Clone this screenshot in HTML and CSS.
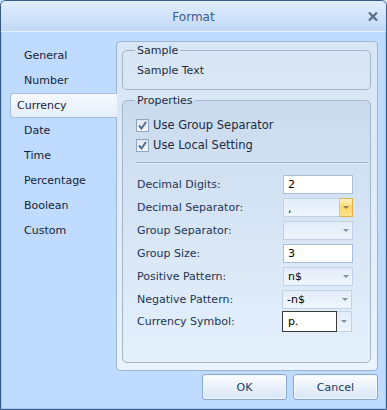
FILE: index.html
```html
<!DOCTYPE html>
<html>
<head>
<meta charset="utf-8">
<link rel="stylesheet" href="styles.css">
</head>
<body>
<div class="window">
  <div class="titlebar">
    <span class="title">Format</span>
    <svg class="close" width="10" height="9" viewBox="0 0 10 9"><path d="M1 0.5 L9 8.5 M9 0.5 L1 8.5" stroke="#5a6d86" stroke-width="2.2" fill="none"/></svg>
  </div>
  <div class="content">
    <div class="main">
      <ul class="nav">
        <li>General</li>
        <li>Number</li>
        <li class="selected">Currency</li>
        <li>Date</li>
        <li>Time</li>
        <li>Percentage</li>
        <li>Boolean</li>
        <li>Custom</li>
      </ul>
      <div class="panel">
        <fieldset class="group sample">
          <legend>Sample</legend>
          <div class="sample-text">Sample Text</div>
        </fieldset>
        <fieldset class="group props">
          <legend>Properties</legend>
          <div class="checks">
            <div class="check"><span class="box"><svg width="9" height="9" viewBox="0 0 9 9"><path d="M1 4.5 L3.5 7.5 L8 1" stroke="#56708f" stroke-width="2" fill="none"/></svg></span><span>Use Group Separator</span></div>
            <div class="check"><span class="box"><svg width="9" height="9" viewBox="0 0 9 9"><path d="M1 4.5 L3.5 7.5 L8 1" stroke="#56708f" stroke-width="2" fill="none"/></svg></span><span>Use Local Setting</span></div>
          </div>
          <div class="sep"></div>
          <div class="rows">
            <div class="row"><span class="label">Decimal Digits:</span><span class="field input">2</span></div>
            <div class="row"><span class="label">Decimal Separator:</span><span class="field combo"><span class="val low">,</span><span class="btn hot"><i class="arrow"></i></span></span></div>
            <div class="row"><span class="label">Group Separator:</span><span class="field combo"><span class="val"></span><span class="btn"><i class="arrow"></i></span></span></div>
            <div class="row"><span class="label">Group Size:</span><span class="field input">3</span></div>
            <div class="row"><span class="label">Positive Pattern:</span><span class="field combo"><span class="val">n$</span><span class="btn"><i class="arrow"></i></span></span></div>
            <div class="row"><span class="label">Negative Pattern:</span><span class="field combo shift"><span class="val">-n$</span><span class="btn"><i class="arrow"></i></span></span></div>
            <div class="row tall"><span class="label">Currency Symbol:</span><span class="field split shift"><span class="val focus">p.</span><span class="btn"><i class="arrow"></i></span></span></div>
          </div>
        </fieldset>
      </div>
    </div>
    <div class="footer">
      <button class="button">OK</button>
      <button class="button">Cancel</button>
    </div>
  </div>
</div>
</body>
</html>
```

FILE: styles.css
```css
html, body {
  margin: 0;
  padding: 0;
  background: #bfdbff;
}
body {
  font-family: "DejaVu Sans", sans-serif;
  font-size: 11px;
  color: #1c2b40;
}
.window {
  width: 387px;
  height: 410px;
  box-sizing: border-box;
  border: 1px solid #36598b;
  border-radius: 6px 6px 0 0;
  display: flex;
  flex-direction: column;
  overflow: hidden;
  background: #bfdbff;
}
.titlebar {
  height: 30px;
  flex: none;
  display: grid;
  grid-template-columns: 1fr auto 1fr;
  align-items: center;
  background: linear-gradient(#e2eeff 0%, #d2e4fb 45%, #c3d9f6 100%);
  border-bottom: 1px solid #e6f0fd;
}
.title {
  grid-column: 2;
  color: #3d5c88;
  font-size: 12px;
  padding-top: 1px;
}
.close {
  grid-column: 3;
  justify-self: end;
  margin-right: 8px;
  margin-top: 1px;
}
.content {
  flex: 1;
  display: flex;
  flex-direction: column;
  background: #bfdbff;
  box-shadow: inset 1px 0 #a9c6ec, inset -1px 0 #a9c6ec, inset 0 -1px #a9c6ec;
}
.main {
  display: flex;
  padding: 9px 8px 0 9px;
}
.nav {
  list-style: none;
  margin: 0;
  padding: 2px 0 0 0;
  width: 106px;
  flex: none;
}
.nav li {
  height: 25px;
  line-height: 25px;
  padding-left: 14px;
  color: #15243a;
}
.nav li.selected {
  position: relative;
  z-index: 1;
  margin-right: -1px;
  padding-left: 6px;
  height: 23px;
  line-height: 23px;
  border: 1px solid #a6bddb;
  border-right: none;
  border-radius: 3px 0 0 3px;
  background: linear-gradient(#f6faff, #e4eefb);
}
.panel {
  flex: 1;
  height: 330px;
  box-sizing: border-box;
  border: 1px solid #9db5d1;
  border-radius: 4px;
  background: linear-gradient(#d7e5f4, #e9f4ff);
  padding: 2px 6px 7px 5px;
  display: flex;
  flex-direction: column;
}
.group {
  margin: 0;
  padding: 0;
  min-width: 0;
  border: 1px solid #a3b5c9;
  border-radius: 5px;
}
.group legend {
  margin-left: 12px;
  padding: 0 2px;
  line-height: 13px;
  color: #1c2b40;
}
.sample-text {
  margin: 7px 0 11px 14px;
  line-height: 14px;
}
.props {
  margin-top: 4px;
  flex: 1;
  background: linear-gradient(#cadbee, #e4f0fc);
}
.checks {
  margin-top: 8px;
}
.check {
  height: 20px;
  display: flex;
  align-items: center;
  padding-left: 13px;
  gap: 4px;
  font-size: 11.5px;
}
.box {
  width: 11px;
  height: 11px;
  border: 1px solid #8ea5bf;
  background: linear-gradient(#dfe7f0, #f4f7fb);
  display: flex;
  align-items: center;
  justify-content: center;
}
.sep {
  margin: 7px 2px 0 12px;
  height: 1px;
  background: #a2b5ca;
  border-bottom: 1px solid #e2edf9;
}
.rows {
  margin-top: 11px;
  padding-left: 14px;
  display: flex;
  flex-direction: column;
  gap: 4px;
}
.row {
  display: flex;
  align-items: center;
  height: 19px;
}
.row.tall {
  height: 21px;
  margin-top: -2px;
}
.label {
  width: 146px;
  flex: none;
  color: #1d3557;
}
.field {
  width: 70px;
  height: 19px;
  box-sizing: border-box;
  display: flex;
  color: #000;
}
.field.shift {
  margin-left: -1px;
}
.input {
  border: 1px solid #a9bfda;
  background: #fff;
  padding-left: 4px;
  line-height: 17px;
}
.combo {
  border: 1px solid #c2d2e6;
  background: linear-gradient(#e2ecf9, #eff5fd);
}
.val {
  flex: 1;
  padding-left: 4px;
  line-height: 17px;
}
.val.low {
  line-height: 20px;
}
.btn {
  width: 12px;
  display: flex;
  align-items: center;
  justify-content: center;
}
.btn.hot {
  margin: -1px -1px -1px 0;
  width: 12px;
  border: 1px solid #e0b24e;
  border-left-color: #ecc670;
  background: linear-gradient(#fff3c6, #ffd86a 50%, #ffe28c);
}
.arrow {
  width: 0;
  height: 0;
  border-left: 3px solid transparent;
  border-right: 3px solid transparent;
  border-top: 3px solid #7e92aa;
}
.btn.hot .arrow {
  border-top-color: #8d7a4f;
}
.split {
  height: 21px;
}
.split .val {
  border: 1px solid #3a3a3a;
  background: #fff;
  line-height: 19px;
  padding-left: 5px;
}
.split .btn {
  width: 14px;
  border: 1px solid #c2d2e6;
  border-left: none;
  background: linear-gradient(#e2ecf9, #eff5fd);
}
.footer {
  display: flex;
  justify-content: flex-end;
  gap: 6px;
  padding: 3px 8px 0 0;
}
.button {
  width: 85px;
  height: 26px;
  margin: 0;
  padding: 0;
  font-family: "DejaVu Sans", sans-serif;
  font-size: 11px;
  color: #1d3a62;
  border: 1px solid #8aa6cb;
  border-radius: 3px;
  background: linear-gradient(#fdfeff, #e9f1fb 50%, #d9e6f7);
  box-shadow: inset 0 0 0 1px #f4f8fe;
}
```
